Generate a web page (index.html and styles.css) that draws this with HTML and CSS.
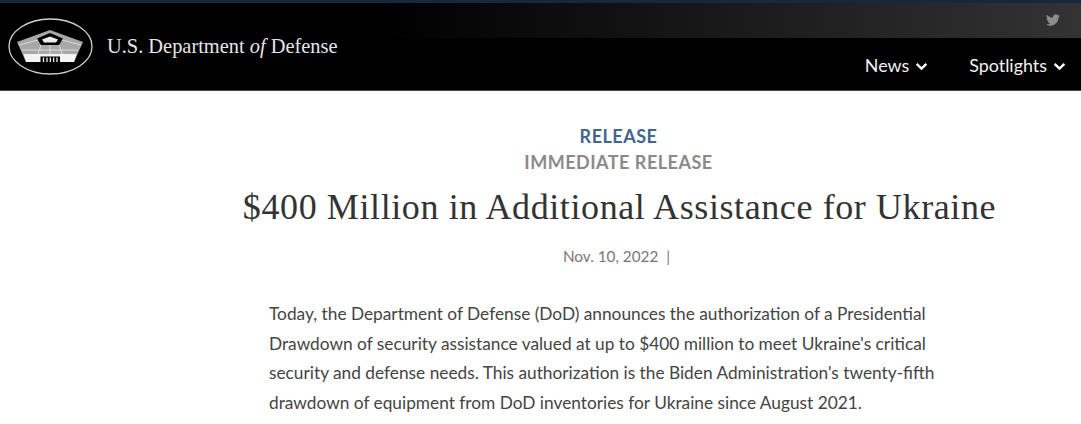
FILE: index.html
```html
<!DOCTYPE html>
<html lang="en">
<head>
<meta charset="utf-8">
<title>$400 Million in Additional Assistance for Ukraine</title>
<link rel="stylesheet" href="styles.css">
</head>
<body>
<header class="site-header">
  <a class="brand" href="#">
    <svg class="seal" viewBox="0 0 86 58" aria-hidden="true">
      <ellipse cx="42.5" cy="28.5" rx="41.5" ry="27.5" fill="#000" stroke="#d0d0d0" stroke-width="1.3"/>
      <path d="M42 12 L75 24 L66 44 L18 44 L9 24 Z" fill="#a8a8a8"/>
      <path d="M15.5 36 H68.5 L66 44 H18 Z" fill="#f4f4f4"/>
      <path d="M42 15 L55 20.5 L51 27 L33 27 L29 20.5 Z" fill="#000"/>
      <path d="M42 18.5 L50 21.5 L48 24.5 L36 24.5 L34 21.5 Z" fill="#ececec"/>
      <path d="M11 27 L30 22 M73 27 L54 22 M14 32 H70 M33 27 L30 36 M51 27 L54 36 M42 27 V36" stroke="#e8e8e8" stroke-width="0.8" fill="none"/>
      <path d="M32.5 38.5 H52 V45 H32.5 Z" fill="#000"/>
      <path d="M35.5 39.5 V44 M39 39.5 V44 M42.3 39.5 V44 M45.6 39.5 V44 M49 39.5 V44" stroke="#eee" stroke-width="1.3"/>
    </svg>
    <span class="brand-name">U.S. Department <em>of</em> Defense</span>
  </a>
  <div class="header-right">
    <div class="utility">
      <svg class="twitter" viewBox="0 0 24 24" aria-hidden="true"><path fill="#8c8c8c" d="M23.95 4.57a10 10 0 0 1-2.82.77 4.96 4.96 0 0 0 2.16-2.72c-.95.55-2 .96-3.12 1.19a4.92 4.92 0 0 0-8.38 4.48C7.69 8.1 4.07 6.13 1.64 3.16a4.82 4.82 0 0 0-.67 2.48c0 1.71.87 3.21 2.19 4.1a4.9 4.9 0 0 1-2.23-.62v.06a4.92 4.92 0 0 0 3.95 4.83 5 5 0 0 1-2.21.08 4.94 4.94 0 0 0 4.6 3.42A9.87 9.87 0 0 1 0 19.54a14 14 0 0 0 7.56 2.21c9.05 0 14-7.5 14-13.98 0-.21 0-.42-.02-.63a9.94 9.94 0 0 0 2.46-2.55z"/></svg>
    </div>
    <nav class="main-nav">
      <a href="#">News <svg class="chev" viewBox="0 0 12 8" aria-hidden="true"><path d="M1.5 1.5 6 6l4.5-4.5" fill="none" stroke="#fff" stroke-width="2.2"/></svg></a>
      <a href="#">Spotlights <svg class="chev" viewBox="0 0 12 8" aria-hidden="true"><path d="M1.5 1.5 6 6l4.5-4.5" fill="none" stroke="#fff" stroke-width="2.2"/></svg></a>
    </nav>
  </div>
</header>
<main class="release">
  <p class="category">RELEASE</p>
  <p class="subcategory">IMMEDIATE RELEASE</p>
  <h1 class="title">$400 Million in Additional Assistance for Ukraine</h1>
  <p class="dateline">Nov. 10, 2022 <span class="pipe">|</span></p>
  <p class="body-text">Today, the Department of Defense (DoD) announces the authorization of a Presidential Drawdown of security assistance valued at up to $400 million to meet Ukraine's critical security and defense needs. This authorization is the Biden Administration's twenty-fifth drawdown of equipment from DoD inventories for Ukraine since August 2021.</p>
</main>
</body>
</html>
```
FILE: styles.css
```css
* { box-sizing: border-box; }
html, body { margin: 0; padding: 0; }
body {
  background: #fff;
  font-family: Lato, "Open Sans", sans-serif;
  overflow: hidden;
  height: 424px;
}
a { color: inherit; text-decoration: none; }

.site-header {
  display: flex;
  justify-content: space-between;
  height: 91px;
  border-top: 3px solid #16273f;
  border-bottom: 1px solid #444;
  background-color: #000;
  background-image: linear-gradient(90deg, #000 0%, #000 35%, #333 100%);
  background-size: 100% 35px;
  background-repeat: no-repeat;
  color: #fff;
}
.brand {
  display: flex;
  align-items: center;
  gap: 13px;
  padding: 0 40px 0 8px;
  background: #000;
}
.seal { width: 86px; height: 58px; display: block; }
.brand-name {
  font-family: "Liberation Serif", serif;
  font-size: 20.4px;
  color: #e6e6e6;
}
.brand-name em { font-style: italic; }
.header-right {
  display: flex;
  flex-direction: column;
  align-items: flex-end;
}
.utility {
  height: 35px;
  display: flex;
  align-items: center;
  padding-right: 21px;
}
.twitter { width: 14px; height: 14px; display: block; margin-top: -1px; }
.main-nav {
  display: flex;
  gap: 41px;
  padding: 16px 15px 0 0;
  font-size: 17.9px;
  line-height: 22px;
  color: #f2f2f2;
}
.main-nav a { display: flex; align-items: center; gap: 6px; }
.chev { width: 13px; height: 9px; display: block; margin-top: 2px; }

.release { padding: 33px 0 0 156px; text-align: center; }
.release p { margin: 0; }
.category {
  font-size: 18px;
  line-height: 24px;
  font-weight: 700;
  letter-spacing: 0.5px;
  color: #44648f;
}
.subcategory {
  font-size: 18px;
  line-height: 27px;
  padding-top: 1px;
  font-weight: 700;
  letter-spacing: 0.5px;
  color: #8a8a8a;
}
.title {
  margin: 7px 0 0;
  padding-left: 2px;
  font-family: "Liberation Serif", serif;
  font-size: 36px;
  line-height: 48px;
  font-weight: 400;
  letter-spacing: 0.6px;
  color: #333;
}
.dateline {
  margin-top: 14px !important;
  padding-right: 4px;
  font-size: 15.3px;
  line-height: 22px;
  color: #777;
}
.pipe { margin-left: 4px; }
.body-text {
  width: 690px;
  margin: 32px 0 0 113px !important;
  text-align: left;
  font-size: 17.3px;
  line-height: 29.7px;
  color: #444;
}
```
